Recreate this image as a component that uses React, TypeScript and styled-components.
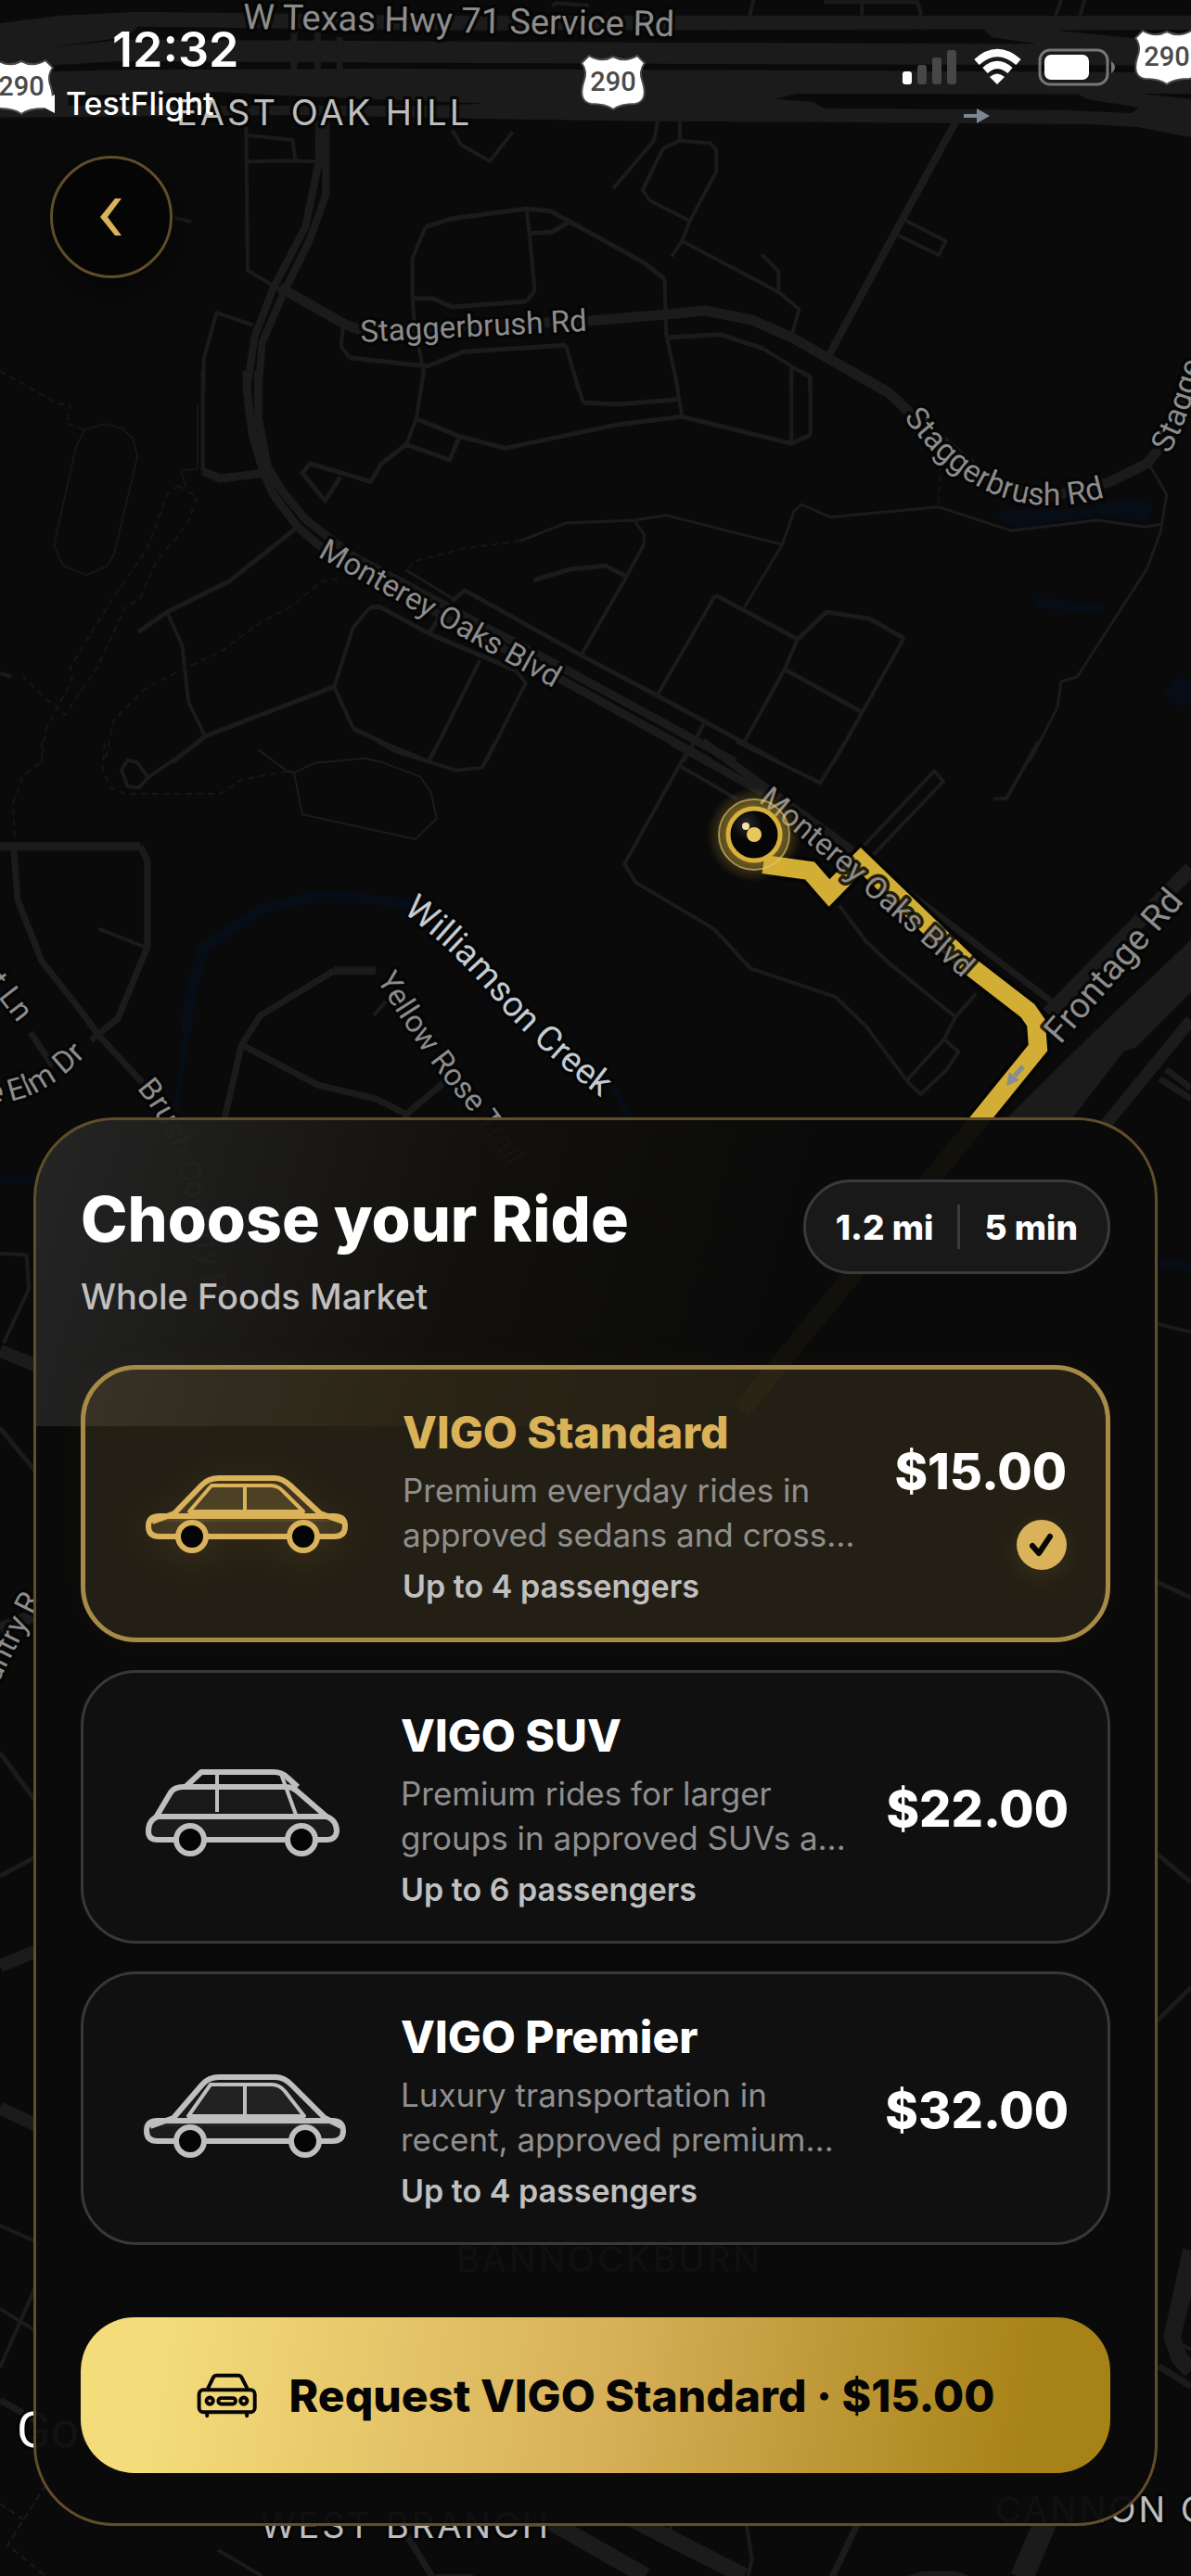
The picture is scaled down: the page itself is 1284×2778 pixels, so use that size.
import React, { useState } from "react";
import styled, { createGlobalStyle } from "styled-components";

const gold = "#d9b25a";
const sans = `Inter, "Liberation Sans", sans-serif`;
const mapSans = `Roboto, "Liberation Sans", sans-serif`;

const GlobalStyle = createGlobalStyle`
  *, *::before, *::after { box-sizing: border-box; }
  body { margin: 0; background: #0a0a0a; font-family: ${sans}; color: #fff; }
  button { font: inherit; border: 0; cursor: pointer; }
  h1, h2, p { margin: 0; }
`;

/* ---------- screen ---------- */

const Screen = styled.main`
  position: relative;
  display: flex;
  flex-direction: column;
  min-height: 100vh;
  overflow: hidden;
`;

const MapCanvas = styled.svg`
  position: absolute;
  inset: 0;
  width: 100%;
  height: 100%;
`;

const Above = styled.div`
  position: relative;
  display: flex;
  flex-direction: column;
  flex: 1;
`;

/* ---------- map drawing ---------- */

const RoadPath = styled.path<{ $w: number; $dash?: boolean; $color?: string }>`
  fill: none;
  stroke: ${(p) => p.$color ?? "#1b1b1b"};
  stroke-width: ${(p) => p.$w}px;
  stroke-linejoin: round;
  stroke-dasharray: ${(p) => (p.$dash ? "7 5" : "none")};
  vector-effect: non-scaling-stroke;
`;

const StreetLabel = styled.text<{ $size?: number; $color?: string }>`
  font-family: ${mapSans};
  font-size: ${(p) => p.$size ?? 33}px;
  fill: ${(p) => p.$color ?? "#8c8c8c"};
  stroke: rgba(5, 5, 5, 0.85);
  stroke-width: 7px;
  stroke-linejoin: round;
  paint-order: stroke;
`;

const PlaceLabel = styled(StreetLabel)`
  font-family: ${sans};
  font-size: 38px;
  fill: #bdbdbd;
  letter-spacing: 3px;
`;

const ShieldText = styled.text`
  font-family: ${mapSans};
  font-size: 29px;
  font-weight: 500;
  fill: #4a4a4a;
  text-anchor: middle;
`;

function Tile({ y, children }: { y: number; children: React.ReactNode }) {
  return <g transform={`translate(0 ${y}) scale(0.81888 0.33333)`}>{children}</g>;
}

function Shield({ x, y }: { x: number; y: number }) {
  return (
    <g transform={`translate(${x} ${y})`}>
      <path
        d="M-26 -27 Q-13 -19 0 -26 Q13 -19 26 -27 L34 -19 Q27 -10 32 2 Q38 22 24 25 Q8 25 0 31 Q-8 25 -24 25 Q-38 22 -32 2 Q-27 -10 -34 -19Z"
        fill="#fff"
        stroke="#4b4b4b"
        strokeWidth="2"
      />
      <ShieldText x="0" y="11">290</ShieldText>
    </g>
  );
}

function MapView() {
  return (
    <MapCanvas viewBox="0 0 1284 2778" preserveAspectRatio="xMidYMid slice" aria-label="Map of the route">
      <defs>
        <path id="stagger1" d="M389 369 L650 356" />
        <path id="stagger2" d="M974 450 Q1025 520 1086 538 Q1145 556 1215 528" />
        <path id="stagger3" d="M1260 490 Q1284 450 1304 360" />
        <path id="monterey1" d="M342 600 L620 755" />
        <path id="monterey2" d="M817 864 L907 940 L988 1011 L1060 1075" />
        <path id="williamson" d="M434 984 Q490 1024 545 1092 Q595 1146 665 1196" />
        <path id="yellow" d="M406 1056 Q452 1134 495 1184 Q545 1244 585 1330" />
        <path id="frontage" d="M1143 1127 L1292 955" />
        <path id="lane" d="M-14 1060 L40 1130" />
        <path id="elm" d="M-14 1188 Q40 1196 104 1126" />
        <path id="brush" d="M147 1174 Q200 1230 226 1420" />
        <path id="country" d="M-60 1930 L44 1724" />
        <radialGradient id="pinGlow">
          <stop offset="0.5" stopColor="#d8b13a" stopOpacity="0.4" />
          <stop offset="1" stopColor="#d8b13a" stopOpacity="0" />
        </radialGradient>
        <radialGradient id="pinBall" cx="0.35" cy="0.3">
          <stop offset="0" stopColor="#2c2c2c" />
          <stop offset="0.6" stopColor="#060606" />
        </radialGradient>
      </defs>
      <rect width="1284" height="2778" fill="#0a0a0a" />

      <Tile y={0}>
        <path fill="#1b1b1b" d="M0 75 L80 50 L180 38 L560 50 H1568 V445 L1500 412 L1435 402 L1175 397 L850 392 L650 385 L400 372 L0 380Z" />
        <path fill="#0a0a0a" d="M60 155 L165 120 L182 86 L600 98 L1295 95 L1305 120 L1365 142 L900 138 L160 128Z M1390 98 L1568 96 V148 L1500 125Z M60 212 L160 198 L700 205 L1568 212 V235 L1100 228 L500 222 L160 226 L60 232Z M90 310 L290 298 L400 312 L640 335 L560 342 L90 342Z M1020 320 L1050 303 L1420 305 L1430 320 L1500 348 L1490 366 L1400 356 L1085 350 L1070 330Z M1500 303 L1568 303 V320Z" />
        <RoadPath $w={7} d="M387 98 V225 M418 95 V225 M447 120 V225" />
        <RoadPath $w={8} d="M420 390 V520 L402 735 L360 930 L335 1090 L325 1265 M429 390 V630 L408 775 L372 955 L345 1110 L340 1265 M1258 395 L1190 700 L1090 1155" />
        <RoadPath $w={11} d="M368 930 L455 1050 L475 1068 L775 1038 L875 1018 L928 1005 L990 1035 L1045 1095 L1165 1265" />
        <RoadPath $w={4} d="M324 410 L326 875 L368 935 M324 437 L385 452 L389 520 M326 523 L385 520 L415 523 M595 420 L607 468 L645 522 L675 427 M866 390 L861 455 L807 610 M895 390 V455 L873 480 L846 615 L855 648 L908 715 M895 455 L935 463 L943 485 V555 L908 715 L898 780 L884 830 M898 780 L1025 945 L1052 1000 L1042 1090 M1003 823 L1025 878 V945 M1190 710 L1245 780 L1236 825 L1183 762 M693 675 L697 755 L704 940 L693 975 M543 960 L546 1060 L558 1205 L554 1265 M543 960 V835 L560 735 M875 903 L877 1080 L893 1265 M452 1050 L449 1120 L460 1157 M745 1117 L762 1265 M268 1265 V1165 L285 1012 L333 1052 M1042 1185 V1265 M1005 1128 L1042 1185 L1066 1220 V1265 M230 705 L252 717 M727 20 L732 10 L775 18 M992 0 L987 50 M1085 7 H1208 L1213 50 M1135 7 V50 M1397 0 L1390 50 M1428 0 L1422 50" />
        <RoadPath $w={5} d="M560 735 L595 707 L693 675 L725 683 L750 717 L848 850 L875 903 M693 975 L595 993 L570 965 H545 M697 755 L727 750 L750 717 M460 1157 L563 1185 L610 1138 L745 1117 M880 1092 L948 1082 L1005 1128" />
      </Tile>

      <Tile y={400}>
        <path fill="#060d17" d="M1305 470 L1325 448 L1420 447 L1485 410 L1520 427 L1510 487 L1445 468 L1345 510Z M1362 730 L1455 760 L1453 784 L1360 768Z M1548 988 L1568 1010 V1085 H1545 L1532 1045Z" />
        <RoadPath $w={9} d="M325 60 L332 200 L347 330 L360 400 L392 505 L425 575 L580 790 M325 0 V60 M340 0 V150 L352 310 L372 390 L402 480 L465 600 L740 960 L968 1265 M580 790 L740 1000 L935 1265 M267 325 L290 348 L350 330" />
        <RoadPath $w={11} d="M1120 0 L1170 70 L1200 140 L1290 330 L1370 415 L1460 360 L1510 300 L1530 240 L1568 60" />
        <RoadPath $w={5} d="M548 155 L605 212 L665 250 L810 175 L898 148 L1042 235 L1067 207 M535 238 L502 300 L488 358 L408 300 L398 330 L428 420 L448 343 M605 212 L592 288 L535 238 M768 103 L815 108 L892 92 M392 505 L302 680 L220 780 L182 845 M270 1182 L330 1125 L440 1022 M487 765 L500 763 L565 850 L680 970 M465 1157 L515 1215 L565 1265 M270 1182 L228 1265 M565 850 L580 790 M595 745 L612 710 L765 920 L865 1050 L1025 1265 M825 665 L797 630 L750 642 L703 677 M942 725 L1050 868 L1088 780 L1145 802 L1190 865 M1033 965 L1135 1105" />
        <RoadPath $w={4} d="M267 0 V325 M558 0 L548 155 L535 238 M1067 207 V20 L1055 0 M1042 235 V0 M755 0 L768 103 M888 0 L898 148 M220 780 L240 890 L248 1070 L270 1182 M440 1022 L465 830 L487 765 M440 1022 L465 1157 M680 970 L692 1010 L640 1265 M632 935 L565 1265 M765 920 L825 665 L848 560 M865 1050 L942 725 M1050 868 L1033 965 L980 1200 M1190 865 L1135 1105 L1098 1265 M927 1140 L900 1265" />
        <RoadPath $w={3} d="M685 550 L745 492 L835 483 L877 467 L1030 562 L980 765 M848 560 V530 L835 483 M1030 562 L1045 455 L1055 432 L1093 473 L1235 440 L1332 517 L1445 483 L1508 505 L1530 495 M1513 303 L1536 400 L1528 520 L1510 640 L1418 990 L1397 1005 L1392 1090 L1355 1265 M535 645 L595 735" />
        <RoadPath $w={2} $color="#161616" d="M112 190 L138 172 L162 187 L175 220 L181 275 L150 595 L140 632 L114 660 L83 630 L71 565 L100 245Z M260 110 V318 L238 322 L245 375" />
        <RoadPath $w={2} $dash $color="#161616" d="M685 550 L608 575 L548 615 L535 645 M0 0 L78 108 H93 L87 170 L112 190 M445 673 L423 680 L385 760 L345 810 L290 910 L240 965 L190 1030 L150 1130 L138 1265 M235 370 L220 400 L195 570 L150 730 L92 960 L95 1000 L60 1160 L55 1265 M235 370 L260 410 L245 500 L205 620 L185 735 L165 765 L130 950 L85 1115 L30 990 M1238 300 L1235 440" />
        <RoadPath $w={4} d="M0 978 L15 990" />
      </Tile>

      <Tile y={800}>
        <RoadPath $w={12} $color="#060d17" d="M245 940 L250 820 L268 665 L345 540 L415 500 L480 507 L545 530" />
        <RoadPath $w={6} $color="#060d17" d="M245 940 L238 1080 L228 1225 M545 530 L600 680 L690 880 L800 1080 L830 1225" />
        <path fill="#1b1b1b" d="M1568 640 L1440 940 L1320 1230 H1408 L1480 1000 L1495 990 L1568 810Z" />
        <RoadPath $w={13} d="M1568 900 L1455 1240" />
        <RoadPath $w={16} d="M1568 410 L1380 880" />
        <RoadPath $w={9} d="M885 0 L1005 165 L1090 310 M925 0 L1150 400 M440 740 H495 M0 338 H185" />
        <RoadPath $w={7} d="M1150 400 L1395 860 M185 338 L194 385 V665 L155 895 L120 965 M18 338 L23 510 L55 710 L105 865 L130 950 L190 1110 M295 1225 L318 980 L343 885 L440 740 M318 980 L418 1110 L495 1155 L535 1205 L590 1090 M535 1205 V1225 M40 940 L70 1050 M1535 1060 L1568 1120 M1527 1090 L1568 1155" />
        <RoadPath $w={4} d="M263 0 L195 115 L183 148 L168 145 L160 90 L168 60 L180 65 L195 115 M498 0 L520 30 L600 92 L635 83 L652 0 M578 0 L565 55 M130 605 L190 663 M508 840 L492 885 M905 30 L822 395 L837 455 L940 605 L988 733 L1100 825 L1140 920 L1195 1100 L1212 1140 L1245 1065 L1262 1003 L1243 962 M1105 530 L1140 645 L1170 715 L1258 890 L1285 815 M1258 890 L1243 962 L1193 1098 M893 75 L970 185 M970 0 L1080 133 L1113 0 M1132 350 L1230 95 L1242 128 L1148 370 M1367 0 L1325 183 L1308 185" />
        <RoadPath $w={2} d="M340 25 L378 95 L387 100 L415 68 L480 53 L502 65 L553 113 L567 160 L575 248 L547 315 L398 235 L387 100" />
        <RoadPath $w={2} $dash $color="#161616" d="M378 95 L318 122 L290 168 H165 L147 150 L135 90 L138 0 M55 0 V65 L30 110 L17 200 L20 325" />
      </Tile>

      <Tile y={1190}>
        <RoadPath $w={9} $color="#060d17" d="M0 245 H60 M1500 505 L1568 530" />
        <RoadPath $w={4} d="M0 485 L35 490 L38 600 L5 775 M1510 705 L1568 740" />
        <RoadPath $w={14} d="M0 800 L60 860 M0 1700 L60 1640 M0 2790 L60 2730 M0 3250 L60 3320" />
        <RoadPath $w={5} d="M0 2100 L60 2300 M0 2500 L60 2420 M1500 1520 L1568 1600 M0 1050 L50 1200 M1510 2400 L1568 2520 M1510 3000 L1568 2860" />
      </Tile>

      <Tile y={2400}>
        <RoadPath $w={18} d="M690 910 L850 1134 M800 910 L980 1134 M1568 80 L1543 360 L1553 430 L1568 470" />
        <RoadPath $w={25} d="M1378 950 L1345 1140" />
        <RoadPath $w={7} d="M535 1000 L570 1140 M1132 950 L1095 1140 M1525 455 L1568 520 M0 565 L50 635" />
        <RoadPath $w={4} d="M0 270 L50 345 M0 460 L50 180 M0 0 L45 50 M287 1050 L345 1134 M880 1000 L885 960 L980 925 L990 1080 L985 1134 M1568 205 L1550 380 L1568 400" />
        <RoadPath $w={2} $dash d="M60 840 L10 1034 L60 1134 M0 900 L30 950" />
        <path fill="#1b1b1b" d="M1195 1134 L1215 1118 H1260 L1275 1134Z M570 1134 L575 1128 H620 L625 1134Z" />
      </Tile>

      <path d="M823 932 L873 939 L894 963 L928 928 L1047 1043 L1108 1090 L1117 1103 L1119 1130 L1055 1209 L800 1520" fill="none" stroke="#050505" strokeWidth="28" />
      <path d="M823 932 L873 939 L894 963 L928 928 L1047 1043 L1108 1090 L1117 1103 L1119 1130 L1055 1209 L800 1520" fill="none" stroke="#d2ae35" strokeWidth="20" />
      <path d="M1103 1150 L1094 1160" stroke="#848c96" strokeWidth="5" />
      <path d="M1085 1171 L1088 1156 L1099 1165Z" fill="#848c96" />
      <path d="M1039 123 H1053 V117 L1067 125 L1053 133 V127 H1039Z" fill="#7d8794" />

      <StreetLabel $size={38} transform="rotate(1 262 34)" x="262" y="31">W Texas Hwy 71 Service Rd</StreetLabel>
      <StreetLabel><textPath href="#stagger1">Staggerbrush Rd</textPath></StreetLabel>
      <StreetLabel $size={34}><textPath href="#stagger2">Staggerbrush Rd</textPath></StreetLabel>
      <StreetLabel $size={34}><textPath href="#stagger3">Stagge</textPath></StreetLabel>
      <StreetLabel><textPath href="#monterey1">Monterey Oaks Blvd</textPath></StreetLabel>
      <StreetLabel><textPath href="#monterey2">Monterey Oaks Blvd</textPath></StreetLabel>
      <StreetLabel $size={38} $color="#c3ccd2"><textPath href="#williamson">Williamson Creek</textPath></StreetLabel>
      <StreetLabel><textPath href="#yellow">Yellow Rose Trail</textPath></StreetLabel>
      <StreetLabel $size={38}><textPath href="#frontage">Frontage Rd</textPath></StreetLabel>
      <StreetLabel><textPath href="#lane">t Ln</textPath></StreetLabel>
      <StreetLabel><textPath href="#elm">e Elm Dr</textPath></StreetLabel>
      <StreetLabel><textPath href="#brush">Brush Country R</textPath></StreetLabel>
      <StreetLabel textAnchor="end"><textPath href="#country" startOffset="100%">Country R</textPath></StreetLabel>
      <PlaceLabel x="190" y="135">EAST OAK HILL</PlaceLabel>
      <PlaceLabel x="492" y="2450">BANNOCKBURN</PlaceLabel>
      <PlaceLabel x="281" y="2737">WEST BRANCH</PlaceLabel>
      <PlaceLabel x="1073" y="2720">CANNON OAKS</PlaceLabel>
      <StreetLabel $size={54} $color="#fff" x="18" y="2639">Google</StreetLabel>

      <Shield x={23} y={92} />
      <Shield x={661} y={87} />
      <Shield x={1258} y={60} />

      <circle cx="813" cy="900" r="51" fill="url(#pinGlow)" />
      <circle cx="813" cy="900" r="38" fill="#d8b13a" fillOpacity="0.22" stroke="#e5cb7a" strokeOpacity="0.6" strokeWidth="2" />
      <circle cx="813" cy="900" r="28" fill="url(#pinBall)" stroke="#d8b13a" strokeWidth="5" />
      <circle cx="813" cy="900" r="8" fill="#e8c75d" />
      <circle cx="804" cy="891" r="4" fill="#f3e3a4" />
    </MapCanvas>
  );
}

/* ---------- status bar ---------- */

const StatusBar = styled.header`
  display: flex;
  justify-content: space-between;
  align-items: flex-start;
  padding: 24px 80px 0 40px;
`;

const StatusLeft = styled.div`
  display: flex;
  flex-direction: column;
  gap: 8px;
`;

const Clock = styled.time`
  padding-left: 81px;
  font-size: 52px;
  font-weight: 600;
  line-height: 60px;
`;

const ReturnLink = styled.button`
  display: flex;
  align-items: center;
  gap: 12px;
  padding: 0;
  background: none;
  color: #fff;
  font-size: 34px;
  font-weight: 500;
  line-height: 40px;
`;

const StatusIcons = styled.svg`
  width: 232px;
  height: 44px;
  margin-top: 26px;
`;

const BackButton = styled.button`
  display: grid;
  place-items: center;
  width: 132px;
  height: 132px;
  margin: 36px 0 48px 54px;
  padding: 0;
  border: 3px solid #5f4d28;
  border-radius: 50%;
  background: #050505;
  box-shadow: 0 12px 36px rgba(0, 0, 0, 0.5);
`;

/* ---------- ride sheet ---------- */

const Sheet = styled.section`
  position: relative;
  display: flex;
  flex-direction: column;
  margin: auto 36px 54px;
  padding: 64px 48px 54px;
  border: 3px solid #614e29;
  border-radius: 87px;
  background:
    linear-gradient(106deg, rgba(255, 255, 255, 0.11), rgba(217, 178, 90, 0.04) 38%, transparent 66%) 0 0 / 100% 330px no-repeat,
    rgba(10, 10, 10, 0.97);
  overflow: hidden;
`;

const SheetHeader = styled.div`
  display: flex;
  justify-content: space-between;
  align-items: flex-start;
  margin-bottom: 50px;
`;

const Heading = styled.div`
  display: flex;
  flex-direction: column;
  gap: 18px;
`;

const Title = styled.h1`
  font-size: 68px;
  font-weight: 800;
  line-height: 84px;
`;

const Destination = styled.p`
  font-size: 38px;
  font-weight: 500;
  line-height: 48px;
  color: #c0c0c0;
`;

const TripPill = styled.div`
  display: flex;
  align-items: center;
  height: 102px;
  padding: 0 32px;
  border: 3px solid #3a3a3a;
  border-radius: 51px;
  background: #191919;
  font-size: 37px;
  font-weight: 800;
`;

const PillRule = styled.span`
  width: 3px;
  height: 48px;
  margin: 0 26px;
  background: #3a3a3a;
`;

const RideList = styled.fieldset`
  display: flex;
  flex-direction: column;
  gap: 30px;
  margin: 0 0 78px;
  padding: 0;
  border: 0;
`;

const RideCard = styled.label<{ $on: boolean }>`
  display: flex;
  align-items: center;
  min-height: ${(p) => (p.$on ? 299 : 295)}px;
  padding: 0 42px 0 58px;
  border: ${(p) => (p.$on ? "5px solid #a88a48" : "3px solid #383838")};
  border-radius: 60px;
  background: ${(p) => (p.$on ? "rgba(217, 178, 90, 0.13)" : "#101010")};
  box-shadow: ${(p) => (p.$on ? "0 0 40px rgba(217, 178, 90, 0.04)" : "none")};
  cursor: pointer;
`;

const RideRadio = styled.input`
  width: 0;
  height: 0;
  margin: 0;
  appearance: none;
`;

const CarArt = styled.svg<{ $on: boolean }>`
  flex: none;
  width: 232px;
  height: 120px;
  margin-right: 52px;
  fill: none;
  color: ${(p) => (p.$on ? gold : "#bfbfbf")};
  stroke: currentColor;
  stroke-width: 6;
  stroke-linejoin: round;
  filter: ${(p) => (p.$on ? "drop-shadow(0 6px 18px rgba(217, 178, 90, 0.14))" : "none")};
`;

const RideText = styled.div`
  display: flex;
  flex: 1;
  flex-direction: column;
  padding-top: 6px;
`;

const RideName = styled.h2<{ $on: boolean }>`
  font-size: 48px;
  font-weight: 800;
  line-height: 56px;
  margin-bottom: 10px;
  color: ${(p) => (p.$on ? gold : "#fff")};
`;

const RideBlurb = styled.p`
  max-width: 496px;
  font-size: 35px;
  line-height: 48px;
  color: #8f8f8f;
  margin-bottom: 10px;
`;

const RideSeats = styled.p`
  font-size: 34px;
  font-weight: 600;
  line-height: 44px;
  color: #c0c0c0;
`;

const PriceColumn = styled.div`
  display: flex;
  flex-direction: column;
  align-items: flex-end;
  gap: 20px;
  padding-top: 4px;
`;

const Price = styled.span`
  font-size: 54px;
  font-weight: 800;
  line-height: 64px;
`;

const CheckBadge = styled.span`
  display: grid;
  place-items: center;
  width: 54px;
  height: 54px;
  border-radius: 50%;
  background: ${gold};
  box-shadow: 0 6px 24px rgba(217, 178, 90, 0.12);
`;

const RequestButton = styled.button`
  display: flex;
  justify-content: center;
  align-items: center;
  gap: 34px;
  height: 168px;
  padding: 0 24px;
  border-radius: 58px;
  background: linear-gradient(99deg, #f4dc7a 8%, #d8b15a 50%, #a78217 92%);
  color: #050505;
  font-size: 48px;
  font-weight: 800;
`;

type Shape = "sedan" | "suv" | "premier";

const rides: { id: Shape; name: string; blurb: string; seats: string; price: string }[] = [
  { id: "sedan", name: "VIGO Standard", blurb: "Premium everyday rides in approved sedans and cross…", seats: "Up to 4 passengers", price: "$15.00" },
  { id: "suv", name: "VIGO SUV", blurb: "Premium rides for larger groups in approved SUVs a…", seats: "Up to 6 passengers", price: "$22.00" },
  { id: "premier", name: "VIGO Premier", blurb: "Luxury transportation in recent, approved premium…", seats: "Up to 4 passengers", price: "$32.00" },
];

function Car({ shape, on }: { shape: Shape; on: boolean }) {
  const rear = shape === "premier" ? 181 : 177;
  return (
    <CarArt $on={on} viewBox="0 -20 232 120" aria-hidden="true">
      {shape === "sedan" && (
        <>
          <path fill="currentColor" fillOpacity="0.12" d="M14 59 Q28 54 38 50 L68 19 Q75 12 86 12 H146 Q154 12 163 20 L195 50 L220 59" />
          <path fill="currentColor" fillOpacity="0.12" d="M22 53 H210 Q222 53 222 64 Q222 75 210 75 H22 Q10 75 10 64 Q10 53 22 53Z" />
          <path fill="currentColor" fillOpacity="0.08" strokeWidth="4" d="M54 48 L78 20 H142 Q150 20 156 27 L177 48Z M114 20 V48" />
        </>
      )}
      {shape === "suv" && (
        <>
          <path fill="currentColor" fillOpacity="0.05" d="M20 51 L36 24 Q40 18 50 18 H160 Q168 18 174 24 L204 50" />
          <path d="M53 17 L69 2 H147 Q156 2 162 8 L173 18" />
          <path fill="currentColor" fillOpacity="0.07" d="M22 50 H204 Q215 54 215 66 Q214 75 204 75 H22 Q12 75 12 66 Q12 54 22 50Z" />
          <path strokeWidth="4" d="M86 2 V45 M155 4 L171 48" />
        </>
      )}
      {shape === "premier" && (
        <>
          <path fill="currentColor" fillOpacity="0.05" d="M14 59 Q28 54 39 50 L70 14 Q77 6 88 6 H149 Q158 6 166 14 L202 50 L220 59" />
          <path fill="currentColor" fillOpacity="0.07" d="M22 53 H210 Q222 53 222 64 Q222 75 210 75 H22 Q10 75 10 64 Q10 53 22 53Z" />
          <path fill="currentColor" fillOpacity="0.06" strokeWidth="4" d="M55 48 L79 14 H145 Q153 14 159 21 L180 48Z M116 14 V48" />
        </>
      )}
      <circle cx="57" cy="75" r="15" fill="#050505" />
      <circle cx={rear} cy="75" r="15" fill="#050505" />
    </CarArt>
  );
}

export default function App() {
  const [picked, setPicked] = useState<Shape>("sedan");
  const current = rides.find((r) => r.id === picked)!;
  return (
    <>
      <GlobalStyle />
      <Screen>
        <MapView />
        <Above>
          <StatusBar>
            <StatusLeft>
              <Clock>12:32</Clock>
              <ReturnLink>
                <svg width="19" height="22" viewBox="0 0 19 22" aria-hidden="true">
                  <path d="M19 1 V21 L0 11Z" fill="#fff" />
                </svg>
                TestFlight
              </ReturnLink>
            </StatusLeft>
            <StatusIcons viewBox="972 50 232 44" role="img" aria-label="Signal, Wi-Fi and battery">
              <rect x="973" y="77" width="10" height="14" rx="3" fill="#fff" />
              <g fill="#474747">
                <rect x="989" y="70" width="10" height="21" rx="3" />
                <rect x="1005" y="62" width="10" height="29" rx="3" />
                <rect x="1021" y="54" width="10" height="37" rx="3" />
              </g>
              <g fill="none" stroke="#fff" strokeWidth="8">
                <path d="M1053 67 Q1075 47 1098 67" />
                <path d="M1062 76 Q1075 64 1089 76" />
              </g>
              <path d="M1075 91 L1067 83 Q1075 76 1083 83Z" fill="#fff" />
              <rect x="1121" y="54" width="73" height="37" rx="11" fill="none" stroke="#777" strokeWidth="3" />
              <rect x="1126" y="59" width="48" height="27" rx="7" fill="#fff" />
              <path d="M1198 66 Q1202 69 1202 72.5 Q1202 76 1198 79Z" fill="#777" />
            </StatusIcons>
          </StatusBar>

          <BackButton aria-label="Back">
            <svg width="26" height="42" viewBox="0 0 26 42" aria-hidden="true">
              <path d="M17 1 H24 L9 21 L24 41 H17 L1 21Z" fill={gold} />
            </svg>
          </BackButton>

          <Sheet>
            <SheetHeader>
              <Heading>
                <Title>Choose your Ride</Title>
                <Destination>Whole Foods Market</Destination>
              </Heading>
              <TripPill>
                <span>1.2 mi</span>
                <PillRule />
                <span>5 min</span>
              </TripPill>
            </SheetHeader>

            <RideList aria-label="Ride type">
              {rides.map((ride) => {
                const on = ride.id === picked;
                return (
                  <RideCard key={ride.id} $on={on}>
                    <RideRadio type="radio" name="ride" checked={on} onChange={() => setPicked(ride.id)} />
                    <Car shape={ride.id} on={on} />
                    <RideText>
                      <RideName $on={on}>{ride.name}</RideName>
                      <RideBlurb>{ride.blurb}</RideBlurb>
                      <RideSeats>{ride.seats}</RideSeats>
                    </RideText>
                    <PriceColumn>
                      <Price>{ride.price}</Price>
                      {on && (
                        <CheckBadge>
                          <svg width="28" height="26" viewBox="0 0 28 26" fill="none" stroke="#050505" strokeWidth="6" strokeLinecap="round" strokeLinejoin="round" aria-hidden="true">
                            <path d="M4 14 L11 22 L23 4" />
                          </svg>
                        </CheckBadge>
                      )}
                    </PriceColumn>
                  </RideCard>
                );
              })}
            </RideList>

            <RequestButton>
              <svg width="66" height="49" viewBox="42 58 200 148" fill="none" stroke="#050505" strokeWidth="12" strokeLinecap="round" strokeLinejoin="round" aria-hidden="true">
                <path d="M80 106 L96 73 Q100 66 108 66 H178 Q186 66 189 73 L206 106" />
                <rect x="50" y="113" width="182" height="73" rx="14" />
                <circle cx="85" cy="149" r="11" />
                <circle cx="196" cy="149" r="11" />
                <rect x="113" y="140" width="56" height="19" rx="9" />
                <path d="M76 188 V198 M206 188 V198" />
              </svg>
              <span>
                Request {current.name} · {current.price}
              </span>
            </RequestButton>
          </Sheet>
        </Above>
      </Screen>
    </>
  );
}
